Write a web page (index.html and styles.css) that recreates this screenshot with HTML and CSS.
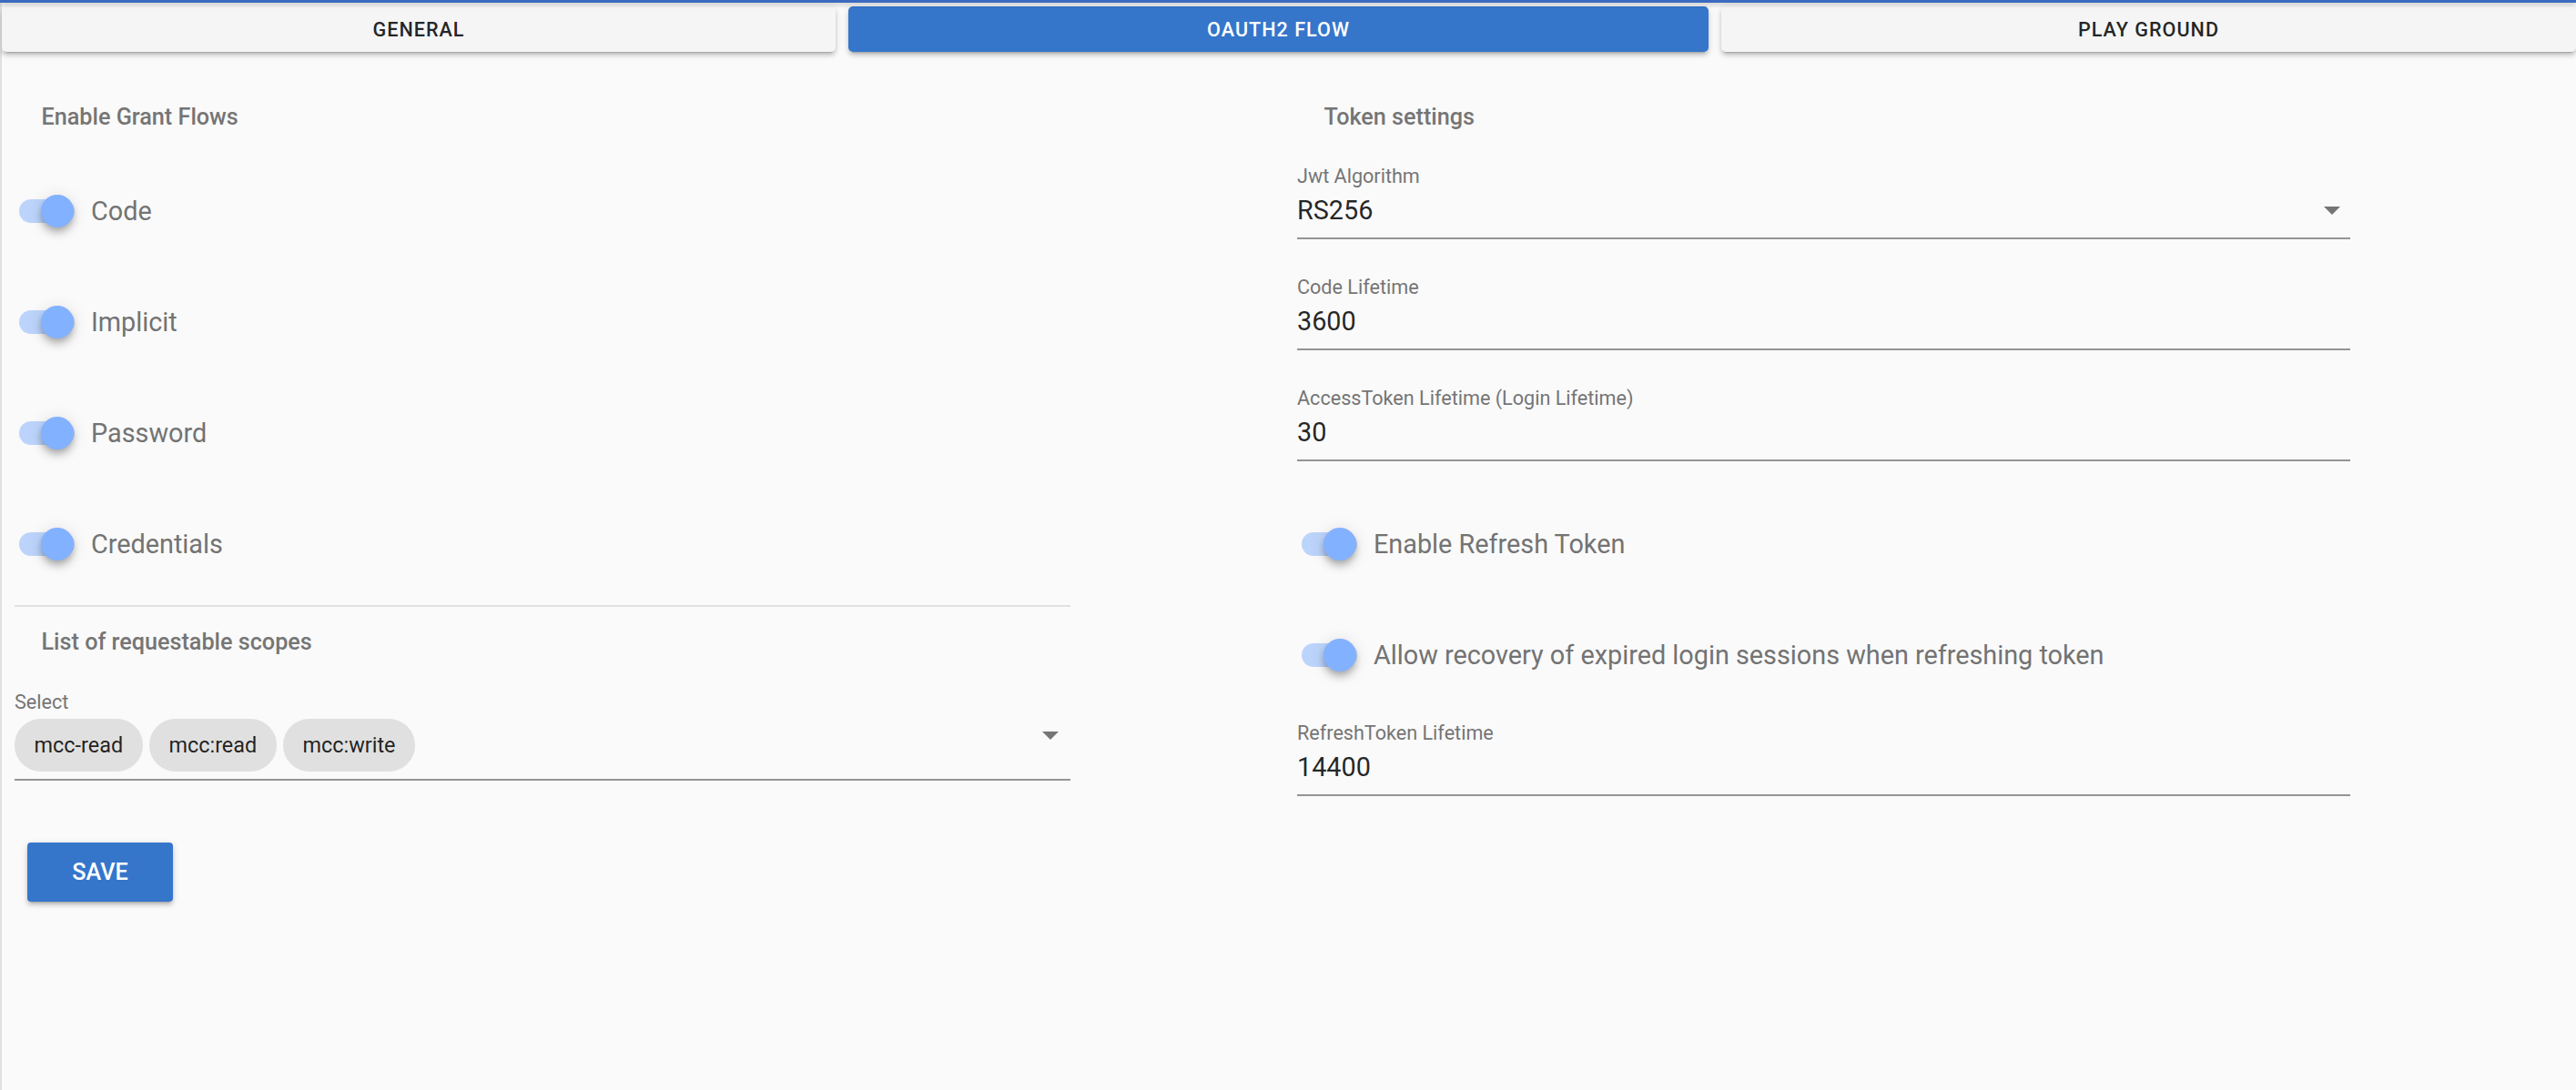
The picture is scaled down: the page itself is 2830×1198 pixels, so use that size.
FILE: index.html
```html
<!DOCTYPE html>
<html lang="en">
<head>
<meta charset="utf-8">
<title>OAuth2 Flow</title>
<link rel="stylesheet" href="styles.css">
</head>
<body>
<div class="page">
  <div class="topbar"></div>
  <nav class="tabs">
    <div class="tab">GENERAL</div>
    <div class="tab active">OAUTH2 FLOW</div>
    <div class="tab">PLAY GROUND</div>
  </nav>
  <main class="content">
    <section class="col">
      <h3 class="heading">Enable Grant Flows</h3>
      <div class="switch-list">
        <div class="switch-row"><span class="switch"><span class="track"></span><span class="thumb"></span></span><span class="switch-label">Code</span></div>
        <div class="switch-row"><span class="switch"><span class="track"></span><span class="thumb"></span></span><span class="switch-label">Implicit</span></div>
        <div class="switch-row"><span class="switch"><span class="track"></span><span class="thumb"></span></span><span class="switch-label">Password</span></div>
        <div class="switch-row"><span class="switch"><span class="track"></span><span class="thumb"></span></span><span class="switch-label">Credentials</span></div>
      </div>
      <hr class="divider">
      <h3 class="heading heading-scopes">List of requestable scopes</h3>
      <div class="select-field">
        <div class="field-label">Select</div>
        <div class="select-control">
          <div class="chips">
            <span class="chip">mcc-read</span>
            <span class="chip">mcc:read</span>
            <span class="chip">mcc:write</span>
          </div>
          <span class="arrow"></span>
        </div>
      </div>
      <button class="save">SAVE</button>
    </section>
    <section class="col">
      <h3 class="heading">Token settings</h3>
      <div class="field first">
        <div class="field-label">Jwt Algorithm</div>
        <div class="field-value">RS256<span class="arrow"></span></div>
      </div>
      <div class="field">
        <div class="field-label">Code Lifetime</div>
        <div class="field-value">3600</div>
      </div>
      <div class="field">
        <div class="field-label">AccessToken Lifetime (Login Lifetime)</div>
        <div class="field-value">30</div>
      </div>
      <div class="switch-list right-switches">
        <div class="switch-row"><span class="switch"><span class="track"></span><span class="thumb"></span></span><span class="switch-label">Enable Refresh Token</span></div>
        <div class="switch-row"><span class="switch"><span class="track"></span><span class="thumb"></span></span><span class="switch-label">Allow recovery of expired login sessions when refreshing token</span></div>
      </div>
      <div class="field last">
        <div class="field-label">RefreshToken Lifetime</div>
        <div class="field-value">14400</div>
      </div>
    </section>
  </main>
</div>
</body>
</html>
```

FILE: styles.css
```css
* { box-sizing: border-box; }

html, body {
  margin: 0;
  padding: 0;
  background: #fafafa;
  font-family: "Roboto", "Liberation Sans", sans-serif;
}

.page {
  min-height: 100vh;
  border-left: 2px solid #e0e0e0;
}

.topbar {
  height: 3px;
  background: #3a6bc0;
  box-shadow: 0 2px 5px rgba(0, 0, 0, 0.25);
  margin-left: -2px;
  position: relative;
  z-index: 2;
}

.tabs {
  display: grid;
  grid-template-columns: 916px 945px 1fr;
  column-gap: 14px;
  padding-top: 4px;
}

.tab {
  height: 50px;
  display: flex;
  align-items: center;
  justify-content: center;
  background: #f5f5f5;
  border-radius: 5px;
  font-size: 21.6px;
  font-weight: 500;
  letter-spacing: 1px;
  color: rgba(0, 0, 0, 0.87);
  box-shadow: 0 5px 2px -4px rgba(0, 0, 0, 0.2), 0 4px 4px 0 rgba(0, 0, 0, 0.14), 0 2px 9px 0 rgba(0, 0, 0, 0.12);
}

.tab.active {
  background: #3576cb;
  color: #ffffff;
}

.content {
  display: grid;
  grid-template-columns: 1160px 1157px;
  column-gap: 249px;
  padding: 54.4px 0 0 14px;
}

.col {
  display: flex;
  flex-direction: column;
  align-items: stretch;
}

.heading {
  margin: 0;
  padding-left: 29.5px;
  font-size: 25.2px;
  line-height: 36px;
  font-weight: 500;
  color: #757575;
}

/* switches */
.switch-list {
  margin-top: 23.6px;
  display: flex;
  flex-direction: column;
}

.switch-row {
  height: 122px;
  display: flex;
  align-items: center;
}

.switch {
  position: relative;
  width: 72px;
  height: 40px;
  margin-right: 12px;
  flex: none;
}

.track {
  position: absolute;
  left: 4.5px;
  top: 50%;
  width: 61px;
  height: 25.2px;
  margin-top: -12.6px;
  border-radius: 14px;
  background: #bcd4fb;
}

.thumb {
  position: absolute;
  left: 29px;
  top: 50%;
  width: 36px;
  height: 36px;
  margin-top: -18px;
  border-radius: 50%;
  background: #82b1ff;
  box-shadow: 0 4px 7px -2px rgba(0, 0, 0, 0.2), 0 7px 9px 0 rgba(0, 0, 0, 0.14), 0 2px 18px 0 rgba(0, 0, 0, 0.12);
}

.switch-label {
  font-size: 28.8px;
  line-height: 36px;
  color: #737373;
}

.right-switches {
  margin-top: 29.9px;
}

.divider {
  margin: 6px 0 0 0;
  border: 0;
  height: 2px;
  background: #e0e0e0;
}

.heading-scopes {
  margin-top: 21.4px;
}

/* fields */
.field-label {
  font-size: 21.6px;
  line-height: 26px;
  color: #757575;
}

.select-field {
  margin-top: 34.2px;
}

.select-control {
  position: relative;
  margin-top: 5.4px;
  padding-bottom: 8.4px;
  border-bottom: 2px solid #949494;
}

.chips {
  display: flex;
  gap: 7.2px;
}

.chip {
  height: 57.6px;
  display: inline-flex;
  align-items: center;
  padding: 0 21.6px;
  border-radius: 28.8px;
  background: #e0e0e0;
  font-size: 23.4px;
  color: rgba(0, 0, 0, 0.87);
}

.arrow {
  position: absolute;
  right: 13px;
  width: 0;
  height: 0;
  border-left: 9px solid transparent;
  border-right: 9px solid transparent;
  border-top: 9px solid #757575;
}

.select-control .arrow {
  top: 14px;
}

.field {
  margin-top: 39.5px;
}

.field.first {
  margin-top: 33.2px;
}

.field.last {
  margin-top: 11.6px;
}

.field-value {
  position: relative;
  margin-top: 6.5px;
  font-size: 28.8px;
  line-height: 36px;
  color: rgba(0, 0, 0, 0.87);
  padding-bottom: 12px;
  border-bottom: 2px solid #949494;
}

.field-value .arrow {
  top: 14px;
  right: 11px;
}

.save {
  align-self: flex-start;
  margin: 68px 0 0 14px;
  min-width: 160px;
  height: 64.8px;
  padding: 0 28.8px;
  border: 0;
  border-radius: 4px;
  background: #3576cb;
  color: #ffffff;
  font-family: "Roboto", "Liberation Sans", sans-serif;
  font-size: 25.2px;
  font-weight: 500;
  box-shadow: 0 5px 2px -4px rgba(0, 0, 0, 0.2), 0 4px 4px 0 rgba(0, 0, 0, 0.14), 0 2px 9px 0 rgba(0, 0, 0, 0.12);
}
```
